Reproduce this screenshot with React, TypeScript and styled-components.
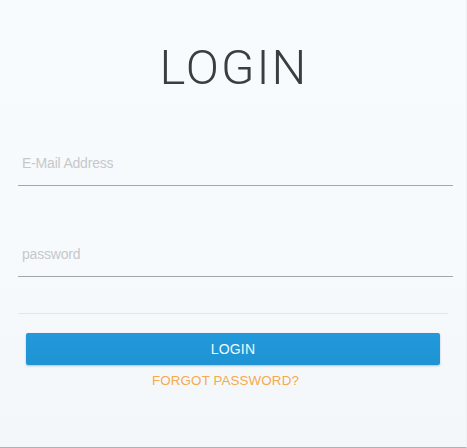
import styled, { createGlobalStyle } from "styled-components";

const GlobalStyle = createGlobalStyle`
  html, body {
    margin: 0;
    padding: 0;
    background: #f6f9fb;
  }
  * {
    box-sizing: border-box;
  }
`;

// 로그인 카드 전체
const Card = styled.div`
  display: flex;
  flex-direction: column;
  width: 467px;
  height: 448px;
  padding: 0 13px 0 18px;

  background: linear-gradient(180deg, #f8fbfe 0%, #f6fafc 55%, #f3f7f9 100%);
  border-right: 1px solid #edf1f4;
  border-bottom: 1px solid #a9b4bb;
`;

const Title = styled.h1`
  margin: 40px 0 0;
  padding-right: 3px;
  height: 56px;

  color: #3b3e41;
  text-align: center;
  font-family: Roboto, "Liberation Sans", sans-serif;
  font-size: 49px;
  font-weight: 300;
  line-height: 56px;
  letter-spacing: 2px;
`;

const Form = styled.form`
  display: flex;
  flex-direction: column;
  margin-top: 54px;
`;

// 밑줄만 있는 입력칸
const Input = styled.input<{ $gap?: number }>`
  display: block;
  width: 100%;
  height: 36px;
  margin: ${({ $gap }) => $gap ?? 0}px 0 0;
  padding: 5px 4px 14px;

  border: none;
  border-bottom: 1px solid #a3a7ab;
  border-radius: 0;
  background: transparent;
  outline: none;

  color: #3d4043;
  font-family: "Liberation Sans", Arial, sans-serif;
  font-size: 14px;
  line-height: 16px;
  letter-spacing: -0.2px;

  &::placeholder {
    color: #c6c8cb;
    opacity: 1;
  }
`;

const Divider = styled.hr`
  margin: 36px 5px 0 0;
  height: 1px;
  border: none;
  background: #e3e6e8;
`;

const LoginButton = styled.button`
  display: flex;
  height: 32px;
  margin: 19px 13px 0 8px;
  justify-content: center;
  align-items: center;

  border: none;
  border-radius: 2px;
  background: linear-gradient(180deg, #2299da 0%, #1f94d5 100%);
  box-shadow: 0 1px 2px rgba(30, 60, 90, 0.3);

  color: #f2f9fd;
  font-family: "Liberation Sans", Arial, sans-serif;
  font-size: 14px;
  line-height: 16px;
  letter-spacing: 0.2px;
  cursor: pointer;
`;

const ForgotLink = styled.a`
  display: block;
  margin: 8px 20px 0 0;

  color: #f6aa4e;
  text-align: center;
  text-decoration: none;
  font-family: "Liberation Sans", Arial, sans-serif;
  font-size: 13.4px;
  line-height: 16px;
  letter-spacing: 0.1px;
  cursor: pointer;
`;

export default function App() {
  return (
    <>
      <GlobalStyle />
      <Card>
        <Title>LOGIN</Title>
        <Form onSubmit={(e) => e.preventDefault()}>
          <Input type="email" placeholder="E-Mail Address" />
          <Input type="password" placeholder="password" $gap={55} />
          <Divider />
          <LoginButton type="submit">LOGIN</LoginButton>
          <ForgotLink>FORGOT PASSWORD?</ForgotLink>
        </Form>
      </Card>
    </>
  );
}
